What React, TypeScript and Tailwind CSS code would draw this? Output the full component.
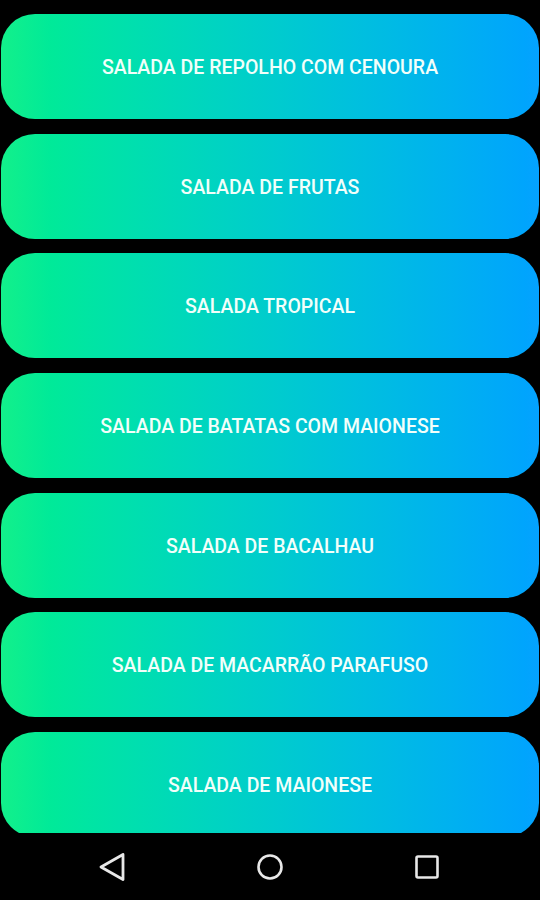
import React from "react";

const items = [
  "SALADA DE REPOLHO COM CENOURA",
  "SALADA DE FRUTAS",
  "SALADA TROPICAL",
  "SALADA DE BATATAS COM MAIONESE",
  "SALADA DE BACALHAU",
  "SALADA DE MACARRÃO PARAFUSO",
  "SALADA DE MAIONESE",
];

export default function App() {
  return (
    <div className="w-[540px] h-[900px] bg-black flex flex-col overflow-hidden" style={{ fontFamily: "Roboto, 'Liberation Sans', sans-serif" }}>
      <div className="flex-1 overflow-hidden pt-[14px] flex flex-col gap-[14.7px]">
        {items.map((t) => (
          <div
            key={t}
            className="shrink-0 h-[105px] mx-[1px] rounded-[34px] bg-gradient-to-r from-[#12f08a] to-[#05a2ff] flex items-center justify-center"
          >
            <span className="text-[19.5px] font-medium text-[#f2fffa] pt-[2px]">{t}</span>
          </div>
        ))}
      </div>
      <div className="h-[67px] shrink-0 bg-black flex items-center">
        <div className="w-[540px] flex items-center">
          <div className="w-[224px] flex justify-end pr-[98px]">
            <svg width="28" height="30" viewBox="0 0 28 30">
              <path d="M25 2.5 L3 15 L25 27.5 Z" fill="none" stroke="#e8e8e8" strokeWidth="2.8" strokeLinejoin="round" />
            </svg>
          </div>
          <div className="w-[92px] flex justify-center">
            <svg width="28" height="28" viewBox="0 0 28 28">
              <circle cx="14" cy="14" r="11.5" fill="none" stroke="#e8e8e8" strokeWidth="2.6" />
            </svg>
          </div>
          <div className="flex-1 flex pl-[99px]">
            <svg width="24" height="24" viewBox="0 0 24 24">
              <rect x="1.5" y="1.5" width="21" height="21" rx="1.5" fill="none" stroke="#e8e8e8" strokeWidth="2.6" />
            </svg>
          </div>
        </div>
      </div>
    </div>
  );
}
